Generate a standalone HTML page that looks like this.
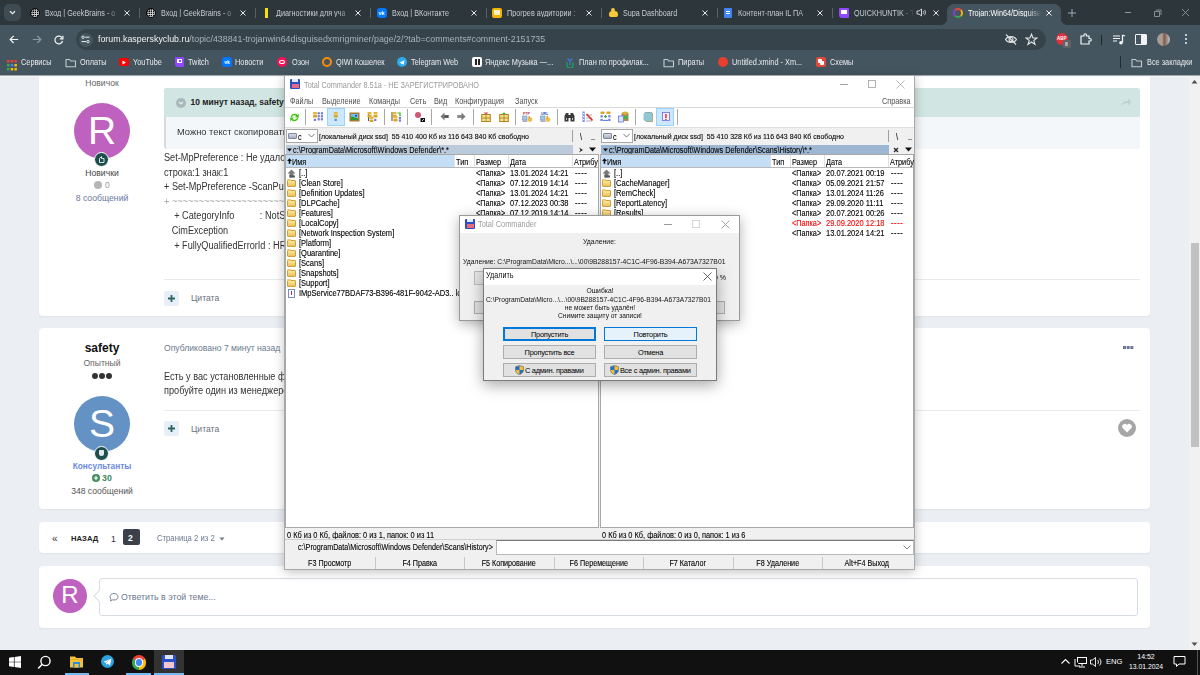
<!DOCTYPE html>
<html><head><meta charset="utf-8">
<style>
*{margin:0;padding:0;box-sizing:border-box}
html,body{width:1200px;height:675px;overflow:hidden;background:#ebeef3;font-family:"Liberation Sans",sans-serif;position:relative}
.a{position:absolute}
.t{position:absolute;white-space:nowrap;line-height:1}
.ct{transform:translateX(-50%)}
.card{position:absolute;background:#fff;border-radius:4px;box-shadow:0 1px 2px rgba(0,0,0,.05)}
.tab{position:absolute;top:0;width:115px;height:25px}
.tab .fav{position:absolute;left:5px;top:8px;width:10px;height:10px;border-radius:50%}
.tab .tt{position:absolute;left:20px;top:8.7px;width:87px;overflow:hidden;white-space:nowrap;line-height:1;font-size:8.3px;transform:scaleX(.87);transform-origin:0 0;color:#c8ced2;-webkit-mask-image:linear-gradient(90deg,#000 82%,transparent)}
.tab .tx{position:absolute;left:98px;top:8px;font-size:9px;line-height:1;color:#dfe3e6}
.sep{position:absolute;top:8px;width:1px;height:10px;background:#56636b}
.bk{position:absolute;top:57px;width:10px;height:11px}
.fold{width:11px;height:9px;top:58px;border:1.2px solid #c4ccd0;border-radius:1px}
.bt{position:absolute;top:58.3px;white-space:nowrap;line-height:1;font-size:8.45px;transform:scaleX(.87);transform-origin:0 0;color:#e8eaed}
.btn{position:absolute;width:93px;height:14px;background:#e1e1e1;border:1px solid #adadad;font-size:7.4px;line-height:13.2px;letter-spacing:-.25px;text-align:center;color:#000;white-space:nowrap}
.tcx{font-size:8.7px;transform:scaleX(.865);transform-origin:0 0;-webkit-text-stroke:.12px currentColor}
</style></head><body>
<!-- ============ FORUM ============ -->
<div class="a" style="left:0;top:75px;width:1189px;height:575px;background:#ebeef3;overflow:hidden">
 <div class="a" style="left:0;top:0;width:1189px;height:575px">
  <!-- card1 -->
  <div class="card" style="left:39px;top:-30px;width:1111px;height:271px"></div>
  <!-- card2 -->
  <div class="card" style="left:39px;top:253px;width:1111px;height:181px"></div>
  <!-- pagination -->
  <div class="card" style="left:39px;top:447px;width:1111px;height:31px"></div>
  <!-- reply -->
  <div class="card" style="left:39px;top:491px;width:1111px;height:62px"></div>
 </div>
</div>
<div class="a" style="left:0;top:74px;width:1200px;height:1px;background:#3f4d56"></div><div class="a" style="left:0;top:75px;width:1200px;height:1px;background:#a3abb1"></div><div class="a" style="left:0;top:76px;width:1189px;height:1px;background:#f2f4f6"></div>
<!-- card1 author -->
<span class="t ct" style="left:102px;top:79px;font-size:8.6px;color:#666">Новичок</span>
<div class="a" style="left:74px;top:103px;width:56px;height:56px;border-radius:50%;background:#bf61bf"></div>
<span class="t" style="left:81px;top:111px;width:42px;text-align:center;font-size:39px;color:#fff">R</span>
<div class="a" style="left:94px;top:152px;width:15px;height:15px;border-radius:50%;background:#1f4f4d;border:1.5px solid #fff"></div>
<svg class="a" style="left:97px;top:155px" width="9" height="9"><path d="M2.5 7.5V3.5L4.5 1.5V3.5H7V7.5Z" fill="none" stroke="#d7e6e5" stroke-width="1"/></svg>
<span class="t ct" style="left:102px;top:169px;font-size:8.6px;color:#444">Новички</span>
<div class="a" style="left:94px;top:181px;width:8px;height:8px;border-radius:50%;background:#b5b5b5"></div>
<span class="t" style="left:105px;top:181px;font-size:8.6px;color:#999">0</span>
<span class="t ct" style="left:102px;top:194px;font-size:8.7px;color:#6b78a0">8 сообщений</span>
<!-- quote -->
<div class="a" style="left:164px;top:88px;width:976px;height:61px;background:#f4f7fa;border-radius:3px;border-left:2px solid #d5dbe0"></div>
<div class="a" style="left:164px;top:88px;width:976px;height:28.5px;background:#d1e6e2;border-radius:3px 3px 0 0"></div>
<div class="a" style="left:176px;top:98px;width:10px;height:10px;border-radius:50%;background:#a9b8b7"></div>
<svg class="a" style="left:178px;top:100px" width="6" height="6"><path d="M1 2L3 4L5 2" stroke="#e8f0ef" stroke-width="1.2" fill="none"/></svg>
<span class="t" style="left:190.5px;top:98.3px;font-size:8.5px;font-weight:bold;color:#222">10 минут назад, safety сказал:</span>
<svg class="a" style="left:1120px;top:97px" width="12" height="10"><path d="M1 9C2 5 5 4 8 4V1.5L11.5 5L8 8.5V6C5 6 3 7 1 9Z" fill="#bcd5d1"/></svg>
<span class="t" style="left:177px;top:126.6px;font-size:9.6px;color:#333;transform:scaleX(.97);transform-origin:0 0">Можно текст скопировать и вставить сюда?</span>
<!-- code text -->
<div class="a" style="left:164px;top:151px;font-size:10px;line-height:14.6px;color:#333;white-space:pre;transform:scaleX(.915);transform-origin:0 0">Set-MpPreference : Не удалось выполнить операцию
строка:1 знак:1
+ Set-MpPreference -ScanPurgeItemsAfterDelay 1
<span style="color:#aaa">+ ~~~~~~~~~~~~~~~~~~~~~~~~~~~~~~~~~~~~~~~~~~~~~~</span>
    + CategoryInfo          : NotSpecified
   CimException
    + FullyQualifiedErrorId : HRESULT 0xc0000142</div>
<div class="a" style="left:164px;top:279px;width:976px;height:1px;background:#e8ebee"></div>
<div class="a" style="left:164px;top:291px;width:15px;height:15px;border-radius:2px;background:#e7f0f7"></div>
<svg class="a" style="left:167px;top:294px" width="9" height="9"><path d="M4.5 1V8M1 4.5H8" stroke="#2e6461" stroke-width="1.8"/></svg>
<span class="t" style="left:191px;top:294px;font-size:8.6px;color:#6b7280">Цитата</span>
<!-- card2 author -->
<span class="t ct" style="left:102px;top:342px;font-size:12px;font-weight:bold;color:#111">safety</span>
<span class="t ct" style="left:102px;top:359px;font-size:8.6px;color:#666">Опытный</span>
<div class="a" style="left:92px;top:373px;width:6px;height:6px;border-radius:50%;background:#333;box-shadow:7px 0 0 #333,14px 0 0 #333"></div>
<div class="a" style="left:74px;top:396px;width:56px;height:56px;border-radius:50%;background:#6592c5"></div>
<span class="t" style="left:81px;top:404px;width:42px;text-align:center;font-size:39px;color:#fff">S</span>
<div class="a" style="left:94px;top:446px;width:15px;height:15px;border-radius:50%;background:#1f4f4d;border:1.5px solid #fff"></div>
<div class="a" style="left:99px;top:450px;width:5px;height:6px;border-radius:1px 1px 3px 3px;background:#e3ecec"></div>
<span class="t ct" style="left:102px;top:462px;font-size:8.3px;font-weight:bold;color:#6a8ae0">Консультанты</span>
<div class="a" style="left:92px;top:474px;width:8px;height:8px;border-radius:50%;background:#3e8b5d"></div>
<svg class="a" style="left:92px;top:474px" width="8" height="8"><path d="M4 1.8V6.2M1.8 4H6.2" stroke="#fff" stroke-width="1.2"/></svg>
<span class="t" style="left:102px;top:474px;font-size:8.8px;font-weight:bold;color:#3e8b5d">30</span>
<span class="t ct" style="left:102px;top:487px;font-size:8.6px;color:#555">348 сообщений</span>
<span class="t" style="left:164px;top:344px;font-size:8.6px;color:#6b7a90">Опубликовано 7 минут назад</span>
<div class="a" style="left:1123px;top:346px;width:2.5px;height:2.5px;background:#6f7a96;box-shadow:3.7px 0 0 #6f7a96,7.4px 0 0 #6f7a96"></div>
<div class="a" style="left:164px;top:369.8px;font-size:10px;line-height:14.2px;color:#333;white-space:pre;transform:scaleX(.915);transform-origin:0 0">Есть у вас установленные файловые менеджеры?
пробуйте один из менеджеров</div>
<div class="a" style="left:164px;top:410px;width:976px;height:1px;background:#e8ebee"></div>
<div class="a" style="left:164px;top:421px;width:15px;height:15px;border-radius:2px;background:#e7f0f7"></div>
<svg class="a" style="left:167px;top:424px" width="9" height="9"><path d="M4.5 1V8M1 4.5H8" stroke="#2e6461" stroke-width="1.8"/></svg>
<span class="t" style="left:191px;top:425px;font-size:8.6px;color:#6b7280">Цитата</span>
<div class="a" style="left:1118px;top:419px;width:18px;height:18px;border-radius:50%;background:#a6a6a6"></div>
<svg class="a" style="left:1121px;top:422px" width="12" height="12"><path d="M6 10.5L1.8 6.3A2.4 2.4 0 0 1 6 3A2.4 2.4 0 0 1 10.2 6.3Z" fill="#fff"/></svg>
<!-- pagination -->
<span class="t" style="left:52px;top:533.5px;font-size:10px;color:#333">«</span>
<span class="t" style="left:71px;top:534.5px;font-size:7.7px;font-weight:bold;color:#222">НАЗАД</span>
<span class="t" style="left:111px;top:534.5px;font-size:8.6px;color:#333">1</span>
<div class="a" style="left:123px;top:529px;width:17px;height:16px;border-radius:2px;background:#3c4048"></div>
<span class="t" style="left:128px;top:534px;font-size:8.6px;font-weight:bold;color:#fff">2</span>
<span class="t" style="left:157px;top:534.5px;font-size:8.2px;color:#6b7a90;transform:scaleX(.94);transform-origin:0 0">Страница 2 из 2</span>
<svg class="a" style="left:218.5px;top:537px" width="6" height="4"><path d="M0.5 0.5H5.5L3 3.5Z" fill="#6b7a90"/></svg>
<!-- reply -->
<div class="a" style="left:53px;top:579px;width:34px;height:34px;border-radius:50%;background:#bf61bf"></div>
<span class="t" style="left:53px;top:583px;width:34px;text-align:center;font-size:24px;color:#fff">R</span>
<div class="a" style="left:99px;top:578px;width:1039px;height:38px;border:1px solid #d8dde3;border-radius:3px;background:#fff"></div>
<div class="a" style="left:95px;top:592px;width:8px;height:8px;border-left:1px solid #d8dde3;border-bottom:1px solid #d8dde3;background:#fff;transform:rotate(45deg)"></div>
<svg class="a" style="left:109px;top:592px" width="10" height="10"><path d="M5 1.5C7.5 1.5 9 3 9 4.7S7.5 8 5 8C4.4 8 3.9 7.9 3.5 7.8L1.5 9L2 7.2C1.4 6.6 1 5.7 1 4.7C1 3 2.5 1.5 5 1.5Z" stroke="#6b7a90" stroke-width="0.9" fill="none"/></svg>
<span class="t" style="left:121px;top:593px;font-size:8.8px;color:#6b7a90">Ответить в этой теме...</span>
<!-- scrollbar -->
<div class="a" style="left:1189px;top:76px;width:11px;height:574px;background:#f1f1f1"></div>
<div class="a" style="left:1191px;top:243px;width:8px;height:204px;background:#c1c1c1"></div>
<svg class="a" style="left:1191px;top:79px" width="7" height="5"><path d="M0.5 4.5L3.5 1L6.5 4.5Z" fill="#505050"/></svg>
<svg class="a" style="left:1191px;top:642px" width="7" height="5"><path d="M0.5 0.5L3.5 4L6.5 0.5Z" fill="#505050"/></svg>

<!-- ============ CHROME ============ -->
<div class="a" style="left:0;top:0;width:1200px;height:25px;background:#2c363b"></div>
<div class="a" style="left:4px;top:4px;width:17px;height:17px;border-radius:5px;background:#3e4b53"></div>
<svg class="a" style="left:8px;top:8px" width="9" height="9" viewBox="0 0 9 9"><path d="M2 3.2 L4.5 5.7 L7 3.2" stroke="#e8eaed" stroke-width="1.3" fill="none"/></svg>
<!-- inactive tabs -->
<div class="tab" style="left:25.0px"><div class="fav" style="background:#0a0a0a;border:1.5px solid #0a0a0a;background-image:radial-gradient(circle,#d8d8d8 0.75px,transparent 1px);background-size:2.2px 2.2px"></div><span class="tt" style="width:87px">Вход | GeekBrains - о</span><svg class="a" style="left:99px;top:9.5px" width="6" height="6"><path d="M0.5 0.5L5.5 5.5M5.5 0.5L0.5 5.5" stroke="#e3e7ea" stroke-width="1"/></svg></div>
<div class="tab" style="left:140.5px"><div class="fav" style="background:#0a0a0a;border:1.5px solid #0a0a0a;background-image:radial-gradient(circle,#d8d8d8 0.75px,transparent 1px);background-size:2.2px 2.2px"></div><span class="tt" style="width:87px">Вход | GeekBrains - о</span><svg class="a" style="left:99px;top:9.5px" width="6" height="6"><path d="M0.5 0.5L5.5 5.5M5.5 0.5L0.5 5.5" stroke="#e3e7ea" stroke-width="1"/></svg></div>
<div class="sep" style="left:139.0px"></div>
<div class="tab" style="left:256.0px"><div class="fav" style="background:transparent;border-radius:0"><div class="a" style="left:4px;top:0;width:2.5px;height:10px;background:#f5e00a"></div></div><span class="tt" style="width:87px">Диагностики для уча</span><svg class="a" style="left:99px;top:9.5px" width="6" height="6"><path d="M0.5 0.5L5.5 5.5M5.5 0.5L0.5 5.5" stroke="#e3e7ea" stroke-width="1"/></svg></div>
<div class="sep" style="left:254.5px"></div>
<div class="tab" style="left:371.5px"><div class="fav" style="background:#0077ff;border-radius:3px;color:#fff;font-size:5.5px;font-weight:bold;text-align:center;line-height:10px">vk</div><span class="tt" style="width:87px">Вход | ВКонтакте</span><svg class="a" style="left:99px;top:9.5px" width="6" height="6"><path d="M0.5 0.5L5.5 5.5M5.5 0.5L0.5 5.5" stroke="#e3e7ea" stroke-width="1"/></svg></div>
<div class="sep" style="left:370.0px"></div>
<div class="tab" style="left:487.0px"><div class="fav" style="background:#f4b400;border-radius:2px"><div class="a" style="left:2px;top:2px;width:6px;height:5px;background:#fff3c4"></div></div><span class="tt" style="width:87px">Прогрев аудитории :</span><svg class="a" style="left:99px;top:9.5px" width="6" height="6"><path d="M0.5 0.5L5.5 5.5M5.5 0.5L0.5 5.5" stroke="#e3e7ea" stroke-width="1"/></svg></div>
<div class="sep" style="left:485.5px"></div>
<div class="tab" style="left:602.5px"><div class="fav" style="background:transparent"><div class="a" style="left:1px;top:3px;width:9px;height:6px;border-radius:4px 4px 3px 3px;background:#f6c83a"></div><div class="a" style="left:3px;top:0px;width:4px;height:4px;border-radius:50%;background:#f6c83a"></div></div><span class="tt" style="width:87px">Supa Dashboard</span><svg class="a" style="left:99px;top:9.5px" width="6" height="6"><path d="M0.5 0.5L5.5 5.5M5.5 0.5L0.5 5.5" stroke="#e3e7ea" stroke-width="1"/></svg></div>
<div class="sep" style="left:601.0px"></div>
<div class="tab" style="left:718.0px"><div class="fav" style="background:#4285f4;border-radius:1px;width:8px;left:6px"><div class="a" style="left:2px;top:3px;width:4px;height:1px;background:#fff"></div><div class="a" style="left:2px;top:5px;width:4px;height:1px;background:#fff"></div></div><span class="tt" style="width:87px">Контент-план IL ПА</span><svg class="a" style="left:99px;top:9.5px" width="6" height="6"><path d="M0.5 0.5L5.5 5.5M5.5 0.5L0.5 5.5" stroke="#e3e7ea" stroke-width="1"/></svg></div>
<div class="sep" style="left:716.5px"></div>
<div class="tab" style="left:833.5px"><div class="fav" style="background:#9146ff;border-radius:1px 1px 1px 3px"><div class="a" style="left:2px;top:2px;width:6px;height:4px;background:#fff"></div></div><span class="tt" style="width:69px">QUICKHUNTIK - Т</span><svg class="a" style="left:82px;top:8px" width="10" height="9"><path d="M1 3H3L5.5 1V8L3 6H1Z" stroke="#dfe3e6" stroke-width="0.9" fill="none"/><path d="M7 3A2 2 0 0 1 7 6M8.3 1.8A3.6 3.6 0 0 1 8.3 7.2" stroke="#dfe3e6" stroke-width="0.8" fill="none"/></svg><svg class="a" style="left:99px;top:9.5px" width="6" height="6"><path d="M0.5 0.5L5.5 5.5M5.5 0.5L0.5 5.5" stroke="#e3e7ea" stroke-width="1"/></svg></div>
<div class="sep" style="left:832.0px"></div>
<!-- active tab -->
<div class="a" style="left:947px;top:4px;width:114px;height:21px;background:#45555f;border-radius:7px 7px 0 0"></div>
<div class="a" style="left:940px;top:18px;width:7px;height:7px;background:radial-gradient(circle at 0 0,#2c363b 7px,#45555f 7.5px)"></div>
<div class="a" style="left:1061px;top:18px;width:7px;height:7px;background:radial-gradient(circle at 7px 0,#2c363b 7px,#45555f 7.5px)"></div>
<div class="a" style="left:953px;top:8px;width:10px;height:10px;border-radius:50%;border:2.5px solid;border-color:#e8453c #f4b400 #34a853 #8e3bd0"></div>
<span class="t" style="left:968px;top:8.7px;font-size:8.4px;transform:scaleX(.87);transform-origin:0 0;color:#fff;width:85px;overflow:hidden;-webkit-mask-image:linear-gradient(90deg,#000 80%,transparent)">Trojan:Win64/Disguised</span>
<svg class="a" style="left:1046px;top:9.5px" width="6" height="6"><path d="M0.5 0.5L5.5 5.5M5.5 0.5L0.5 5.5" stroke="#fff" stroke-width="1"/></svg>
<svg class="a" style="left:1067px;top:8px" width="10" height="10"><path d="M5 1V9M1 5H9" stroke="#aab3b8" stroke-width="0.9"/></svg>
<div class="a" style="left:1125px;top:12px;width:6px;height:1px;background:#8f989d"></div>
<svg class="a" style="left:1153px;top:8px" width="9" height="10"><path d="M1.5 3.5H6.5V8.5H1.5Z" stroke="#8f989d" stroke-width="0.9" fill="none"/><path d="M3 2H8V7" stroke="#8f989d" stroke-width="0.9" fill="none"/></svg>
<svg class="a" style="left:1181px;top:8px" width="9" height="9"><path d="M1 1L8 8M8 1L1 8" stroke="#9aa0a4" stroke-width="0.8"/></svg>
<!-- toolbar -->
<div class="a" style="left:0;top:25px;width:1200px;height:50px;background:#45555f"></div>
<svg class="a" style="left:9px;top:35px" width="10" height="9"><path d="M9.2 4.5H1.2M4.6 1L1.1 4.5L4.6 8" stroke="#f1f3f4" stroke-width="1.15" fill="none"/></svg>
<svg class="a" style="left:31.5px;top:35px" width="10" height="9"><path d="M0.8 4.5H8.8M5.4 1L8.9 4.5L5.4 8" stroke="#8c989f" stroke-width="1.15" fill="none"/></svg>
<svg class="a" style="left:54px;top:34.5px" width="10" height="10"><path d="M8.3 3.2A3.9 3.9 0 1 0 8.6 6" stroke="#f1f3f4" stroke-width="1.2" fill="none"/><path d="M8.9 0.8V3.9H5.8" stroke="#f1f3f4" stroke-width="1.2" fill="none"/></svg>
<div class="a" style="left:76px;top:29px;width:970px;height:21px;border-radius:11px;background:#36434a"></div>
<div class="a" style="left:78.5px;top:32.5px;width:14px;height:14px;border-radius:50%;background:#45555f"></div>
<svg class="a" style="left:81px;top:35px" width="9" height="9"><circle cx="2" cy="2.2" r="1.2" stroke="#eef0f1" stroke-width="0.9" fill="none"/><path d="M4.2 2.2H8.5M0.5 6.6H5.2" stroke="#eef0f1" stroke-width="1"/><circle cx="7" cy="6.6" r="1.2" stroke="#eef0f1" stroke-width="0.9" fill="none"/></svg>
<span class="t" style="left:98px;top:34.3px;font-size:9.5px;transform:scaleX(.93);transform-origin:0 0;color:#f1f3f4">forum.kasperskyclub.ru<span style="color:#a9b4ba">/topic/438841-trojanwin64disguisedxmrigminer/page/2/?tab=comments#comment-2151735</span></span>
<svg class="a" style="left:1004px;top:33px" width="14" height="13"><path d="M1.5 6.5C4 2.5 10 2.5 12.5 6.5C10 10.5 4 10.5 1.5 6.5Z" stroke="#dfe3e6" stroke-width="1.1" fill="none"/><circle cx="7" cy="6.5" r="2" stroke="#dfe3e6" stroke-width="1.1" fill="none"/><path d="M2 1.5L12 11.5" stroke="#dfe3e6" stroke-width="1.1"/></svg>
<svg class="a" style="left:1025px;top:33px" width="13" height="13"><path d="M6.5 1.2L8 5H12L8.8 7.4L10 11.5L6.5 9L3 11.5L4.2 7.4L1 5H5Z" stroke="#dfe3e6" stroke-width="1.1" fill="none"/></svg>
<div class="a" style="left:1056px;top:33px;width:12px;height:12px;border-radius:50%;background:#e0303a"></div>
<span class="t" style="left:1057px;top:37px;font-size:4.5px;color:#fff;font-weight:bold">ABP</span>
<div class="a" style="left:1063px;top:40px;width:8px;height:8px;border-radius:1px;background:#5f6368"></div>
<span class="t" style="left:1065px;top:42px;font-size:5px;color:#fff">8</span>
<svg class="a" style="left:1079px;top:33px" width="13" height="13"><path d="M2 3H5V2A1.2 1.2 0 0 1 7.5 2V3H10V5.5H11A1.2 1.2 0 0 1 11 8H10V11H2Z" stroke="#f1f3f4" stroke-width="1.2" fill="none"/></svg>
<div class="a" style="left:1101px;top:35px;width:1px;height:10px;background:#1f272b"></div>
<svg class="a" style="left:1112px;top:33px" width="14" height="13"><path d="M1 3H8M1 5.5H8M1 8H5" stroke="#f1f3f4" stroke-width="1.2"/><path d="M10.5 2V9.5" stroke="#f1f3f4" stroke-width="1.3"/><circle cx="9" cy="9.8" r="1.8" fill="#f1f3f4"/><path d="M10.5 2L13 3" stroke="#f1f3f4" stroke-width="1.2"/></svg>
<div class="a" style="left:1135px;top:34px;width:12px;height:11px;border:1.3px solid #f1f3f4;border-radius:1px"></div>
<div class="a" style="left:1141px;top:35px;width:5px;height:9px;background:#f1f3f4"></div>
<div class="a" style="left:1157px;top:33px;width:13px;height:13px;border-radius:50%;background:linear-gradient(90deg,#9aa0a6,#b49a8a 40%,#7b5a48 55%,#c2c6c9)"></div>
<div class="a" style="left:1185px;top:34px;width:2px;height:2px;border-radius:50%;background:#f1f3f4;box-shadow:0 4px 0 #f1f3f4,0 8px 0 #f1f3f4"></div>

<!-- bookmarks -->
<div class="bk" style="left:7px"><svg width="10" height="11"><g fill="#ea4335"><rect x="0" y="0" width="2.5" height="2.5"/><rect x="3.7" y="0" width="2.5" height="2.5"/><rect x="7.4" y="0" width="2.5" height="2.5"/></g><g><rect x="0" y="4" width="2.5" height="2.5" fill="#34a853"/><rect x="3.7" y="4" width="2.5" height="2.5" fill="#4285f4"/><rect x="7.4" y="4" width="2.5" height="2.5" fill="#fbbc04"/><rect x="0" y="8" width="2.5" height="2.5" fill="#34a853"/><rect x="3.7" y="8" width="2.5" height="2.5" fill="#fbbc04"/><rect x="7.4" y="8" width="2.5" height="2.5" fill="#fbbc04"/></g></svg></div>
<span class="bt" style="left:21px">Сервисы</span>
<svg class="a" style="left:65px;top:58px" width="12" height="10"><path d="M1 1.5H4.5L5.8 3H10.5V8.8H1Z" stroke="#c4ccd0" stroke-width="1.1" fill="none" stroke-linejoin="round"/></svg>
<span class="bt" style="left:80px">Оплаты</span>
<div class="bk" style="left:119px;top:58px;width:10px;height:8px;background:#f00;border-radius:2px"></div><svg class="a" style="left:122px;top:60px" width="5" height="5"><path d="M0.5 0.5L4 2.5L0.5 4.5Z" fill="#fff"/></svg>
<span class="bt" style="left:133px">YouTube</span>
<div class="bk" style="left:175px;top:57px;width:9px;height:10px;background:#9146ff;border-radius:1px 1px 1px 3px"></div><div class="a" style="left:177px;top:59px;width:5px;height:4px;background:#fff"></div><div class="a" style="left:178.5px;top:60px;width:0.8px;height:2px;background:#9146ff"></div><div class="a" style="left:180px;top:60px;width:0.8px;height:2px;background:#9146ff"></div>
<span class="bt" style="left:188px">Twitch</span>
<div class="bk" style="left:222px;top:57px;width:10px;height:10px;background:#0077ff;border-radius:3px;color:#fff;font-size:5px;font-weight:bold;text-align:center;line-height:10px">vk</div>
<span class="bt" style="left:235px">Новости</span>
<div class="bk" style="left:277px;top:57px;width:10px;height:10px;background:#f91155;border-radius:50%"></div><div class="a" style="left:279px;top:60px;width:6px;height:4px;border:1.3px solid #fff;border-radius:50%"></div>
<span class="bt" style="left:292px">Озон</span>
<div class="bk" style="left:322px;top:57px;width:10px;height:10px;border:2px solid #ff8c00;border-radius:50%"></div>
<span class="bt" style="left:336px">QIWI Кошелек</span>
<div class="bk" style="left:397px;top:57px;width:10px;height:10px;background:#2aabee;border-radius:50%"></div><svg class="a" style="left:399px;top:59.5px" width="6" height="5"><path d="M0.2 2.4L5.6 0.3L4.7 4.7L2.8 3.4L2 4.4V3.1L4.6 0.9L1.6 2.9Z" fill="#fff"/></svg>
<span class="bt" style="left:411px">Telegram Web</span>
<div class="bk" style="left:472px;top:57px;width:10px;height:10px;background:#fff;border-radius:2px"></div><div class="a" style="left:475px;top:59px;width:1.5px;height:6px;background:#222"></div><div class="a" style="left:478px;top:59px;width:1.5px;height:6px;background:#222"></div>
<span class="bt" style="left:485px">Яндекс Музыка —...</span>
<svg class="a" style="left:565px;top:57px" width="10" height="11"><path d="M2 5V8A3 3 0 0 0 8 8V5" stroke="#1aa260" stroke-width="1.3" fill="none"/><path d="M2.5 1.5L5 4L7.5 1.5M5 4V8" stroke="#3b7dd8" stroke-width="1.2" fill="none"/></svg>
<span class="bt" style="left:579px">План по профилак...</span>
<svg class="a" style="left:663px;top:58px" width="12" height="10"><path d="M1 1.5H4.5L5.8 3H10.5V8.8H1Z" stroke="#c4ccd0" stroke-width="1.1" fill="none" stroke-linejoin="round"/></svg>
<span class="bt" style="left:678px">Пираты</span>
<div class="bk" style="left:718px;top:57px;width:10px;height:10px;background:#e8402f;border-radius:50%"></div>
<span class="bt" style="left:732px">Untitled.xmind - Xm...</span>
<div class="bk" style="left:816px;top:57px;width:10px;height:10px;background:#e04a3a;border-radius:2px"></div><div class="a" style="left:818px;top:59px;width:4px;height:4px;background:#fff;border-radius:1px;box-shadow:2px 2px 0 #fff"></div>
<span class="bt" style="left:830px">Схемы</span>
<div class="a" style="left:1120px;top:56px;width:1px;height:12px;background:#222b2f"></div>
<svg class="a" style="left:1131px;top:58px" width="12" height="10"><path d="M1 1.5H4.5L5.8 3H10.5V8.8H1Z" stroke="#c4ccd0" stroke-width="1.1" fill="none" stroke-linejoin="round"/></svg>
<span class="bt" style="left:1147px">Все закладки</span>

<!-- ============ TOTAL COMMANDER ============ -->
<div class="a" style="left:284px;top:75px;width:631px;height:495px;background:#f0f0f0;border:1px solid #a9a9a9;box-shadow:0 2px 10px rgba(0,0,0,.25)"></div>
<div class="a" style="left:285px;top:76px;width:629px;height:31px;background:#fff"></div>
<div class="a" style="left:290px;top:79px;width:10px;height:10px;background:#2b4fc7;border-radius:1px"></div>
<div class="a" style="left:292px;top:79px;width:6px;height:3px;background:#e8ecf8"></div>
<div class="a" style="left:291.5px;top:84px;width:7px;height:4px;background:#e86a7c"></div>
<span class="t" style="left:304px;top:81px;font-size:8.39px;transform:scaleX(.87);transform-origin:0 0;color:#9a9a9a">Total Commander 8.51a - НЕ ЗАРЕГИСТРИРОВАНО</span>
<div class="a" style="left:840px;top:84px;width:8px;height:1px;background:#a0a0a0"></div>
<svg class="a" style="left:868px;top:80px" width="8" height="8"><rect x="0.5" y="0.5" width="7" height="7" stroke="#a0a0a0" stroke-width="0.8" fill="none"/></svg>
<svg class="a" style="left:895.5px;top:80px" width="9" height="9"><path d="M0.5 0.5L8.5 8.5M8.5 0.5L0.5 8.5" stroke="#a0a0a0" stroke-width="0.75"/></svg>
<span class="t" style="left:290px;top:97px;font-size:8.39px;transform:scaleX(.87);transform-origin:0 0;color:#505050">Файлы</span>
<span class="t" style="left:322px;top:97px;font-size:8.39px;transform:scaleX(.87);transform-origin:0 0;color:#505050">Выделение</span>
<span class="t" style="left:369px;top:97px;font-size:8.39px;transform:scaleX(.87);transform-origin:0 0;color:#505050">Команды</span>
<span class="t" style="left:410px;top:97px;font-size:8.39px;transform:scaleX(.87);transform-origin:0 0;color:#505050">Сеть</span>
<span class="t" style="left:434px;top:97px;font-size:8.39px;transform:scaleX(.87);transform-origin:0 0;color:#505050">Вид</span>
<span class="t" style="left:455px;top:97px;font-size:8.39px;transform:scaleX(.87);transform-origin:0 0;color:#505050">Конфигурация</span>
<span class="t" style="left:515px;top:97px;font-size:8.39px;transform:scaleX(.87);transform-origin:0 0;color:#505050">Запуск</span>
<span class="t" style="left:882px;top:97px;font-size:8.39px;transform:scaleX(.87);transform-origin:0 0;color:#505050">Справка</span>
<div class="a" style="left:285px;top:107px;width:629px;height:1px;background:#dadada"></div>
<div class="a" style="left:285px;top:108px;width:629px;height:19px;background:#fff"></div>
<div class="a" style="left:285px;top:127px;width:629px;height:1px;background:#dedede"></div>
<div class="a" style="left:327px;top:108px;width:18px;height:18px;background:#cce8ff;border:1px solid #99d1ff"></div>
<div class="a" style="left:656px;top:108px;width:18px;height:18px;background:#cce8ff;border:1px solid #99d1ff"></div>
<div class="a" style="left:305px;top:109px;width:1px;height:16px;background:#a8a8a8"></div>
<div class="a" style="left:384px;top:109px;width:1px;height:16px;background:#a8a8a8"></div>
<div class="a" style="left:407px;top:109px;width:1px;height:16px;background:#a8a8a8"></div>
<div class="a" style="left:431px;top:109px;width:1px;height:16px;background:#a8a8a8"></div>
<div class="a" style="left:473px;top:109px;width:1px;height:16px;background:#a8a8a8"></div>
<div class="a" style="left:515px;top:109px;width:1px;height:16px;background:#a8a8a8"></div>
<div class="a" style="left:557px;top:109px;width:1px;height:16px;background:#a8a8a8"></div>
<div class="a" style="left:635px;top:109px;width:1px;height:16px;background:#a8a8a8"></div>
<div class="a" style="left:677px;top:109px;width:1px;height:16px;background:#a8a8a8"></div>
<svg class="a" style="left:289px;top:111.5px" width="11" height="11" viewBox="0 0 11 11"><path d="M1.5 5.2C2 2.8 4 1.6 6.2 1.8C7.3 1.9 8 2.3 8.6 2.9L9.8 1.6V5.4H6L7.3 4.1C6 2.9 3.6 3.1 2.9 5.3Z" fill="#45c514"/><path d="M9.5 5.8C9 8.2 7 9.4 4.8 9.2C3.7 9.1 3 8.7 2.4 8.1L1.2 9.4V5.6H5L3.7 6.9C5 8.1 7.4 7.9 8.1 5.7Z" fill="#45c514"/></svg>
<svg class="a" style="left:313px;top:112px" width="11" height="10" viewBox="0 0 11 10"><rect x="0" y="0" width="4" height="2.6" rx="0.6" fill="#e5b83c"/><rect x="0" y="3" width="4" height="2.6" rx="0.6" fill="#d9a52a"/><rect x="0.8" y="6.8" width="2.2" height="2.2" fill="#6c7ed8"/><rect x="4.6" y="0.2" width="2.2" height="2.2" fill="#6c7ed8"/><rect x="4.6" y="3.2" width="2.2" height="2.2" fill="#6c7ed8"/><rect x="4.6" y="6.2" width="2.2" height="2.2" fill="#6c7ed8"/><rect x="7.8" y="0.2" width="2.2" height="2.2" fill="#6c7ed8"/><rect x="7.8" y="3.2" width="2.2" height="2.2" fill="#6c7ed8"/><rect x="7.8" y="6.2" width="2.2" height="2.2" fill="#6c7ed8"/></svg>
<svg class="a" style="left:333px;top:112px" width="6" height="10" viewBox="0 0 6 10"><rect x="0.8" y="0" width="4" height="2.6" rx="0.6" fill="#e5b83c"/><rect x="0.8" y="3" width="4" height="2.6" rx="0.6" fill="#d9a52a"/><rect x="1.6" y="6.8" width="2.2" height="2.2" fill="#6c7ed8"/></svg>
<svg class="a" style="left:349px;top:112px" width="11" height="10" viewBox="0 0 11 10"><rect x="0.5" y="0.5" width="10" height="9" fill="#a57a32"/><rect x="2" y="2" width="7" height="6" fill="#6ec0ee"/><path d="M2 8V5C4 4 6 5.5 9 6.5V8Z" fill="#2f9a2f"/><circle cx="7" cy="3.8" r="1" fill="#2a3a7a"/></svg>
<svg class="a" style="left:367px;top:112px" width="11" height="10" viewBox="0 0 11 10"><rect x="1" y="2" width="1" height="7" fill="#555"/><rect x="0.5" y="0" width="4" height="2.6" rx="0.6" fill="#e5b83c"/><rect x="0.5" y="3" width="4" height="2.6" rx="0.6" fill="#d9a52a"/><rect x="2.5" y="4.5" width="4" height="2.6" rx="0.6" fill="#e5b83c"/><rect x="2.5" y="7.5" width="4" height="2.6" rx="0.6" fill="#d9a52a"/><rect x="6.5" y="0" width="4" height="2.6" rx="0.6" fill="#e5b83c"/><rect x="6.5" y="3" width="4" height="2.6" rx="0.6" fill="#d9a52a"/><rect x="7.2" y="6.8" width="2.2" height="2.2" fill="#6c7ed8"/></svg>
<svg class="a" style="left:391px;top:111px" width="11" height="11" viewBox="0 0 11 11"><rect x="0.5" y="1" width="1" height="9" fill="#444"/><rect x="1.5" y="1" width="4" height="2.6" rx="0.6" fill="#e5b83c"/><rect x="1.5" y="4" width="4" height="2.6" rx="0.6" fill="#d9a52a"/><rect x="2.5" y="5" width="4" height="2.6" rx="0.6" fill="#e5b83c"/><rect x="2.5" y="8" width="4" height="2.6" rx="0.6" fill="#d9a52a"/><path d="M6.5 2H9V4" stroke="#2cb52c" stroke-width="1.2" fill="none"/><path d="M7.8 4L9 5.5L10.2 4Z" fill="#2cb52c"/><rect x="7.8" y="6.0" width="2.2" height="2.2" fill="#6c7ed8"/><rect x="7.8" y="8.5" width="2.2" height="2.2" fill="#6c7ed8"/></svg>
<svg class="a" style="left:414px;top:111px" width="12" height="12" viewBox="0 0 12 12"><circle cx="4" cy="4" r="3" fill="#c8385a" opacity=".85"/><rect x="6.5" y="7" width="4.5" height="4" fill="#111"/><path d="M8 10L10 8" stroke="#fff" stroke-width="0.8"/></svg>
<svg class="a" style="left:440px;top:112px" width="9" height="9" viewBox="0 0 9 9"><path d="M0.5 4.5L4.5 0.5V3H8.5V6H4.5V8.5Z" fill="#7a7a7a"/><path d="M4.5 3H8.5V6H4.5" fill="#5a5a5a"/></svg>
<svg class="a" style="left:457px;top:112px" width="9" height="9" viewBox="0 0 9 9"><path d="M8.5 4.5L4.5 0.5V3H0.5V6H4.5V8.5Z" fill="#7a7a7a"/><path d="M4.5 3H0.5V6H4.5" fill="#8a8a8a"/></svg>
<svg class="a" style="left:481px;top:112px" width="10" height="10" viewBox="0 0 10 10"><path d="M2.5 0.5H7.5L5 2.5Z" fill="#e0405a"/><rect x="0.7" y="2.5" width="8.6" height="7" fill="#f6e08a" stroke="#b08420" stroke-width="1"/><path d="M5 2.5V9.5M0.7 6H9.3" stroke="#b08420" stroke-width="0.9"/></svg>
<svg class="a" style="left:499px;top:112px" width="10" height="10" viewBox="0 0 10 10"><path d="M2.5 2.5H7.5L5 0.3Z" fill="#30c030"/><rect x="0.7" y="2.5" width="8.6" height="7" fill="#f6e08a" stroke="#b08420" stroke-width="1"/><path d="M5 2.5V9.5M0.7 6H9.3" stroke="#b08420" stroke-width="0.9"/></svg>
<svg class="a" style="left:522px;top:111px" width="11" height="12" viewBox="0 0 11 12"><text x="1" y="3.5" font-size="3.6" font-family="Liberation Sans" font-weight="bold" fill="#b03050">FTP</text><rect x="0.5" y="5" width="4.5" height="4" fill="#9ecbe8" stroke="#7a8ab8" stroke-width="0.6"/><rect x="0.5" y="9.5" width="5" height="1.2" fill="#8a8aa8"/><circle cx="8" cy="8.6" r="2.4" fill="#f0c04a"/><rect x="6.5" y="5" width="1.5" height="3" fill="#e0a830"/></svg>
<svg class="a" style="left:540px;top:111px" width="11" height="12" viewBox="0 0 11 12"><text x="1" y="3.5" font-size="3.6" font-family="Liberation Sans" font-weight="bold" fill="#3050b0">URL</text><rect x="0.5" y="5" width="4.5" height="4" fill="#9ecbe8" stroke="#7a8ab8" stroke-width="0.6"/><rect x="0.5" y="9.5" width="5" height="1.2" fill="#8a8aa8"/><circle cx="8" cy="8.6" r="2.4" fill="#f0c04a"/><rect x="6.5" y="5" width="1.5" height="3" fill="#e0a830"/></svg>
<svg class="a" style="left:564px;top:112px" width="11" height="10" viewBox="0 0 11 10"><path d="M0.5 9.5V4L2 1H4.5V9.5Z" fill="#3a3a3a"/><path d="M10.5 9.5V4L9 1H6.5V9.5Z" fill="#3a3a3a"/><rect x="4" y="3" width="3" height="3" fill="#3a3a3a"/><rect x="2" y="6" width="1" height="2" fill="#bbb"/><rect x="8" y="6" width="1" height="2" fill="#bbb"/></svg>
<svg class="a" style="left:582px;top:111px" width="12" height="12" viewBox="0 0 12 12"><rect x="0.5" y="0.5" width="2.2" height="10.5" fill="#7a8ce0"/><rect x="1" y="2" width="1.2" height="1.2" fill="#fff"/><rect x="1" y="5" width="1.2" height="1.2" fill="#fff"/><rect x="1" y="8" width="1.2" height="1.2" fill="#fff"/><path d="M4 4H10M4 7H10M4 10H10" stroke="#9a9a9a" stroke-width="0.8"/><path d="M4.5 3L10.5 9.5" stroke="#e02a2a" stroke-width="1.6"/></svg>
<svg class="a" style="left:600px;top:111px" width="11" height="12" viewBox="0 0 11 12"><rect x="0.5" y="0.5" width="4" height="2.5" rx="0.8" fill="#d9a52a"/><rect x="6.5" y="0.5" width="4" height="2.5" rx="0.8" fill="#d9a52a"/><rect x="0.5" y="4.2" width="2.2" height="2.2" fill="#6c7ed8"/><rect x="0.5" y="7.800000000000001" width="2.2" height="2.2" fill="#6c7ed8"/><rect x="8.3" y="4.2" width="2.2" height="2.2" fill="#6c7ed8"/><rect x="8.3" y="7.800000000000001" width="2.2" height="2.2" fill="#6c7ed8"/><path d="M5.5 4V7M4 5.5H7" stroke="#30b030" stroke-width="1.1"/><path d="M3 9.4H8" stroke="#4a7ae0" stroke-width="1"/></svg>
<svg class="a" style="left:618px;top:111px" width="11" height="12" viewBox="0 0 11 12"><rect x="3.5" y="2" width="7" height="8" fill="#a88a5a"/><ellipse cx="7" cy="2" rx="3" ry="1.5" fill="#d9b040"/><rect x="0.5" y="5" width="5" height="6" fill="#d8e4f8" stroke="#6a7ad8" stroke-width="0.8"/><circle cx="7.8" cy="6.5" r="1.8" fill="#30c030"/></svg>
<svg class="a" style="left:643px;top:112px" width="10" height="10" viewBox="0 0 10 10"><path d="M1.5 0.5H9V9.5H2.5L0.5 8V2Z" fill="#8fc8d4"/><path d="M2 0.5H9" stroke="#8a9a9a" stroke-width="0.8"/><path d="M3 9.6H9.5V1" stroke="#a08a5a" stroke-width="0.8" fill="none"/></svg>
<svg class="a" style="left:662px;top:112px" width="8" height="9" viewBox="0 0 8 9"><rect x="0.5" y="0.5" width="7" height="8" fill="#f0f2ff" stroke="#7a7ae0" stroke-width="0.9"/><rect x="3.2" y="2" width="1.4" height="4" fill="#e02020"/><rect x="3.2" y="6.8" width="1.4" height="1.2" fill="#e02020"/></svg>
<div class="a" style="left:286px;top:129px;width:32px;height:14px;background:#fff;border:1px solid #a8a8a8"></div>
<div class="a" style="left:288px;top:133px;width:9px;height:6px;background:linear-gradient(#d8dce8,#a8acc0);border-radius:1px;border:1px solid #8088a0"></div>
<span class="t" style="left:298px;top:132.5px;font-size:8.39px;transform:scaleX(.87);transform-origin:0 0;color:#000;-webkit-text-stroke:.1px #000">c</span>
<svg class="a" style="left:308px;top:133px" width="7" height="5"><path d="M0.5 1L3.5 4L6.5 1" stroke="#666" stroke-width="0.9" fill="none"/></svg>
<span class="t" style="left:319px;top:132.5px;font-size:8.05px;transform:scaleX(.87);transform-origin:0 0;color:#000;-webkit-text-stroke:.1px #000">[локальный диск ssd]&nbsp; 55 410 400 Кб из 116 643 840 Кб свободно</span>
<div class="a" style="left:572px;top:130px;width:1px;height:12px;background:#a0a0a0"></div>
<span class="t" style="left:580px;top:132.5px;font-size:8.39px;transform:scaleX(.87);transform-origin:0 0;color:#000;-webkit-text-stroke:.1px #000">\</span>
<span class="t" style="left:591px;top:132.5px;font-size:8.39px;transform:scaleX(.87);transform-origin:0 0;color:#000;-webkit-text-stroke:.1px #000">..</span>
<div class="a" style="left:601px;top:129px;width:32px;height:14px;background:#fff;border:1px solid #a8a8a8"></div>
<div class="a" style="left:603px;top:133px;width:9px;height:6px;background:linear-gradient(#d8dce8,#a8acc0);border-radius:1px;border:1px solid #8088a0"></div>
<span class="t" style="left:613px;top:132.5px;font-size:8.39px;transform:scaleX(.87);transform-origin:0 0;color:#000;-webkit-text-stroke:.1px #000">c</span>
<svg class="a" style="left:623px;top:133px" width="7" height="5"><path d="M0.5 1L3.5 4L6.5 1" stroke="#666" stroke-width="0.9" fill="none"/></svg>
<span class="t" style="left:634px;top:132.5px;font-size:8.05px;transform:scaleX(.87);transform-origin:0 0;color:#000;-webkit-text-stroke:.1px #000">[локальный диск ssd]&nbsp; 55 410 328 Кб из 116 643 840 Кб свободно</span>
<div class="a" style="left:888px;top:130px;width:1px;height:12px;background:#a0a0a0"></div>
<span class="t" style="left:896px;top:132.5px;font-size:8.39px;transform:scaleX(.87);transform-origin:0 0;color:#000;-webkit-text-stroke:.1px #000">\</span>
<span class="t" style="left:908px;top:132.5px;font-size:8.39px;transform:scaleX(.87);transform-origin:0 0;color:#000;-webkit-text-stroke:.1px #000">..</span>
<div class="a" style="left:286px;top:145px;width:287px;height:9px;background:#bccbdb"></div>
<div class="a" style="left:601px;top:145px;width:288px;height:9px;background:#9db6d3"></div>
<svg class="a" style="left:287px;top:148px" width="5" height="4"><path d="M0 0.5H5L2.5 3.5Z" fill="#111"/></svg>
<svg class="a" style="left:603px;top:148px" width="5" height="4"><path d="M0 0.5H5L2.5 3.5Z" fill="#111"/></svg>
<span class="t" style="left:293px;top:146px;font-size:8.39px;transform:scaleX(.87);transform-origin:0 0;color:#000;-webkit-text-stroke:.1px #000">c:\ProgramData\Microsoft\Windows Defender\*.*</span>
<span class="t" style="left:609px;top:146px;font-size:8.39px;transform:scaleX(.87);transform-origin:0 0;color:#000;-webkit-text-stroke:.1px #000">c:\ProgramData\Microsoft\Windows Defender\Scans\History\*.*</span>
<svg class="a" style="left:578px;top:147px" width="6" height="6"><path d="M1 0.5L5 3L1 5.5L2.5 3Z" fill="#222"/></svg>
<svg class="a" style="left:589px;top:147px" width="7" height="5"><path d="M0 0.5H7L3.5 4.5Z" fill="#111"/></svg>
<svg class="a" style="left:893px;top:147px" width="6" height="6"><path d="M1 1L5 5M5 1L1 5" stroke="#222" stroke-width="1.2"/></svg>
<svg class="a" style="left:905px;top:147px" width="7" height="5"><path d="M0 0.5H7L3.5 4.5Z" fill="#111"/></svg>
<div class="a" style="left:285px;top:154px;width:314px;height:374px;background:#fff;border:1px solid #a8a8a8"></div>
<div class="a" style="left:286px;top:155px;width:168px;height:12px;background:#c4dff5"></div>
<div class="a" style="left:286px;top:167px;width:312px;height:1px;background:#b8b8b8"></div>
<svg class="a" style="left:287px;top:157.5px" width="5" height="6"><path d="M2.5 0.3L5 3H3.3V5.8H1.7V3H0Z" fill="#111"/></svg>
<span class="t" style="left:292px;top:157.5px;font-size:8.39px;transform:scaleX(.87);transform-origin:0 0;color:#000;-webkit-text-stroke:.1px #000">Имя</span>
<div class="a" style="left:454px;top:155px;width:1px;height:12px;background:#e0e0e0"></div>
<span class="t" style="left:456px;top:157.5px;font-size:8.39px;transform:scaleX(.87);transform-origin:0 0;color:#000;-webkit-text-stroke:.1px #000">Тип</span>
<div class="a" style="left:474px;top:155px;width:1px;height:12px;background:#e0e0e0"></div>
<span class="t" style="left:476px;top:157.5px;font-size:8.39px;transform:scaleX(.87);transform-origin:0 0;color:#000;-webkit-text-stroke:.1px #000">Размер</span>
<div class="a" style="left:508px;top:155px;width:1px;height:12px;background:#e0e0e0"></div>
<span class="t" style="left:510px;top:157.5px;font-size:8.39px;transform:scaleX(.87);transform-origin:0 0;color:#000;-webkit-text-stroke:.1px #000">Дата</span>
<div class="a" style="left:572px;top:155px;width:1px;height:12px;background:#e0e0e0"></div>
<span class="t" style="left:574px;top:157.5px;font-size:8.39px;transform:scaleX(.87);transform-origin:0 0;color:#000;-webkit-text-stroke:.1px #000">Атрибу</span>
<svg class="a" style="left:287px;top:169px" width="9" height="9"><path d="M4.5 0.5L8.5 4.5H6.5V8.5H2.5V4.5H0.5Z" fill="#7a7a7a"/><path d="M2.5 6V8.5H8V6.5" fill="#5a5a5a"/></svg>
<span class="t tcx" style="left:298.5px;top:169.2px;color:#000">[..]</span>
<span class="t tcx" style="left:476.3px;top:169.2px;color:#000;transform:scaleX(.84)">&lt;Папка&gt;</span>
<span class="t tcx" style="left:510px;top:169.2px;color:#000;transform:scaleX(.865)">13.01.2024 14:21</span>
<span class="t tcx" style="left:574.5px;top:169.2px;color:#000;letter-spacing:.7px">----</span>
<div class="a" style="left:286.5px;top:180px;width:9px;height:7px;background:linear-gradient(#fbe79a,#eec15a);border:1px solid #caa040;border-radius:1px"></div><div class="a" style="left:286.5px;top:179px;width:4px;height:2px;background:#eec864;border-radius:1px 1px 0 0"></div>
<span class="t tcx" style="left:298.5px;top:179.2px;color:#000">[Clean Store]</span>
<span class="t tcx" style="left:476.3px;top:179.2px;color:#000;transform:scaleX(.84)">&lt;Папка&gt;</span>
<span class="t tcx" style="left:510px;top:179.2px;color:#000;transform:scaleX(.865)">07.12.2019 14:14</span>
<span class="t tcx" style="left:574.5px;top:179.2px;color:#000;letter-spacing:.7px">----</span>
<div class="a" style="left:286.5px;top:190px;width:9px;height:7px;background:linear-gradient(#fbe79a,#eec15a);border:1px solid #caa040;border-radius:1px"></div><div class="a" style="left:286.5px;top:189px;width:4px;height:2px;background:#eec864;border-radius:1px 1px 0 0"></div>
<span class="t tcx" style="left:298.5px;top:189.2px;color:#000">[Definition Updates]</span>
<span class="t tcx" style="left:476.3px;top:189.2px;color:#000;transform:scaleX(.84)">&lt;Папка&gt;</span>
<span class="t tcx" style="left:510px;top:189.2px;color:#000;transform:scaleX(.865)">13.01.2024 14:21</span>
<span class="t tcx" style="left:574.5px;top:189.2px;color:#000;letter-spacing:.7px">----</span>
<div class="a" style="left:286.5px;top:200px;width:9px;height:7px;background:linear-gradient(#fbe79a,#eec15a);border:1px solid #caa040;border-radius:1px"></div><div class="a" style="left:286.5px;top:199px;width:4px;height:2px;background:#eec864;border-radius:1px 1px 0 0"></div>
<span class="t tcx" style="left:298.5px;top:199.2px;color:#000">[DLPCache]</span>
<span class="t tcx" style="left:476.3px;top:199.2px;color:#000;transform:scaleX(.84)">&lt;Папка&gt;</span>
<span class="t tcx" style="left:510px;top:199.2px;color:#000;transform:scaleX(.865)">07.12.2023 00:38</span>
<span class="t tcx" style="left:574.5px;top:199.2px;color:#000;letter-spacing:.7px">----</span>
<div class="a" style="left:286.5px;top:210px;width:9px;height:7px;background:linear-gradient(#fbe79a,#eec15a);border:1px solid #caa040;border-radius:1px"></div><div class="a" style="left:286.5px;top:209px;width:4px;height:2px;background:#eec864;border-radius:1px 1px 0 0"></div>
<span class="t tcx" style="left:298.5px;top:209.2px;color:#000">[Features]</span>
<span class="t tcx" style="left:476.3px;top:209.2px;color:#000;transform:scaleX(.84)">&lt;Папка&gt;</span>
<span class="t tcx" style="left:510px;top:209.2px;color:#000;transform:scaleX(.865)">07.12.2019 14:14</span>
<span class="t tcx" style="left:574.5px;top:209.2px;color:#000;letter-spacing:.7px">----</span>
<div class="a" style="left:286.5px;top:220px;width:9px;height:7px;background:linear-gradient(#fbe79a,#eec15a);border:1px solid #caa040;border-radius:1px"></div><div class="a" style="left:286.5px;top:219px;width:4px;height:2px;background:#eec864;border-radius:1px 1px 0 0"></div>
<span class="t tcx" style="left:298.5px;top:219.2px;color:#000">[LocalCopy]</span>
<div class="a" style="left:286.5px;top:230px;width:9px;height:7px;background:linear-gradient(#fbe79a,#eec15a);border:1px solid #caa040;border-radius:1px"></div><div class="a" style="left:286.5px;top:229px;width:4px;height:2px;background:#eec864;border-radius:1px 1px 0 0"></div>
<span class="t tcx" style="left:298.5px;top:229.2px;color:#000">[Network Inspection System]</span>
<div class="a" style="left:286.5px;top:240px;width:9px;height:7px;background:linear-gradient(#fbe79a,#eec15a);border:1px solid #caa040;border-radius:1px"></div><div class="a" style="left:286.5px;top:239px;width:4px;height:2px;background:#eec864;border-radius:1px 1px 0 0"></div>
<span class="t tcx" style="left:298.5px;top:239.2px;color:#000">[Platform]</span>
<div class="a" style="left:286.5px;top:250px;width:9px;height:7px;background:linear-gradient(#fbe79a,#eec15a);border:1px solid #caa040;border-radius:1px"></div><div class="a" style="left:286.5px;top:249px;width:4px;height:2px;background:#eec864;border-radius:1px 1px 0 0"></div>
<span class="t tcx" style="left:298.5px;top:249.2px;color:#000">[Quarantine]</span>
<div class="a" style="left:286.5px;top:260px;width:9px;height:7px;background:linear-gradient(#fbe79a,#eec15a);border:1px solid #caa040;border-radius:1px"></div><div class="a" style="left:286.5px;top:259px;width:4px;height:2px;background:#eec864;border-radius:1px 1px 0 0"></div>
<span class="t tcx" style="left:298.5px;top:259.2px;color:#000">[Scans]</span>
<div class="a" style="left:286.5px;top:270px;width:9px;height:7px;background:linear-gradient(#fbe79a,#eec15a);border:1px solid #caa040;border-radius:1px"></div><div class="a" style="left:286.5px;top:269px;width:4px;height:2px;background:#eec864;border-radius:1px 1px 0 0"></div>
<span class="t tcx" style="left:298.5px;top:269.2px;color:#000">[Snapshots]</span>
<div class="a" style="left:286.5px;top:280px;width:9px;height:7px;background:linear-gradient(#fbe79a,#eec15a);border:1px solid #caa040;border-radius:1px"></div><div class="a" style="left:286.5px;top:279px;width:4px;height:2px;background:#eec864;border-radius:1px 1px 0 0"></div>
<span class="t tcx" style="left:298.5px;top:279.2px;color:#000">[Support]</span>
<div class="a" style="left:288px;top:289px;width:7px;height:9px;background:#fff;border:1px solid #7a8ac8"></div><div class="a" style="left:291px;top:291px;width:1px;height:4px;background:#e02020"></div>
<span class="t tcx" style="left:298.5px;top:289.2px;color:#000">IMpService77BDAF73-B396-481F-9042-AD3.. log</span>
<div class="a" style="left:600px;top:154px;width:314px;height:374px;background:#fff;border:1px solid #a8a8a8"></div>
<div class="a" style="left:601px;top:155px;width:169px;height:12px;background:#c4dff5"></div>
<div class="a" style="left:601px;top:167px;width:312px;height:1px;background:#b8b8b8"></div>
<svg class="a" style="left:602px;top:157.5px" width="5" height="6"><path d="M2.5 0.3L5 3H3.3V5.8H1.7V3H0Z" fill="#111"/></svg>
<span class="t" style="left:607px;top:157.5px;font-size:8.39px;transform:scaleX(.87);transform-origin:0 0;color:#000;-webkit-text-stroke:.1px #000">Имя</span>
<div class="a" style="left:770px;top:155px;width:1px;height:12px;background:#e0e0e0"></div>
<span class="t" style="left:772px;top:157.5px;font-size:8.39px;transform:scaleX(.87);transform-origin:0 0;color:#000;-webkit-text-stroke:.1px #000">Тип</span>
<div class="a" style="left:790px;top:155px;width:1px;height:12px;background:#e0e0e0"></div>
<span class="t" style="left:792px;top:157.5px;font-size:8.39px;transform:scaleX(.87);transform-origin:0 0;color:#000;-webkit-text-stroke:.1px #000">Размер</span>
<div class="a" style="left:824px;top:155px;width:1px;height:12px;background:#e0e0e0"></div>
<span class="t" style="left:826px;top:157.5px;font-size:8.39px;transform:scaleX(.87);transform-origin:0 0;color:#000;-webkit-text-stroke:.1px #000">Дата</span>
<div class="a" style="left:888px;top:155px;width:1px;height:12px;background:#e0e0e0"></div>
<span class="t" style="left:890px;top:157.5px;font-size:8.39px;transform:scaleX(.87);transform-origin:0 0;color:#000;-webkit-text-stroke:.1px #000">Атрибу</span>
<svg class="a" style="left:602px;top:169px" width="9" height="9"><path d="M4.5 0.5L8.5 4.5H6.5V8.5H2.5V4.5H0.5Z" fill="#7a7a7a"/><path d="M2.5 6V8.5H8V6.5" fill="#5a5a5a"/></svg>
<span class="t tcx" style="left:613.5px;top:169.2px;color:#000">[..]</span>
<span class="t tcx" style="left:792.3px;top:169.2px;color:#000;transform:scaleX(.84)">&lt;Папка&gt;</span>
<span class="t tcx" style="left:826px;top:169.2px;color:#000;transform:scaleX(.865)">20.07.2021 00:19</span>
<span class="t tcx" style="left:890.5px;top:169.2px;color:#000;letter-spacing:.7px">----</span>
<div class="a" style="left:601.5px;top:180px;width:9px;height:7px;background:linear-gradient(#fbe79a,#eec15a);border:1px solid #caa040;border-radius:1px"></div><div class="a" style="left:601.5px;top:179px;width:4px;height:2px;background:#eec864;border-radius:1px 1px 0 0"></div>
<span class="t tcx" style="left:613.5px;top:179.2px;color:#000">[CacheManager]</span>
<span class="t tcx" style="left:792.3px;top:179.2px;color:#000;transform:scaleX(.84)">&lt;Папка&gt;</span>
<span class="t tcx" style="left:826px;top:179.2px;color:#000;transform:scaleX(.865)">05.09.2021 21:57</span>
<span class="t tcx" style="left:890.5px;top:179.2px;color:#000;letter-spacing:.7px">----</span>
<div class="a" style="left:601.5px;top:190px;width:9px;height:7px;background:linear-gradient(#fbe79a,#eec15a);border:1px solid #caa040;border-radius:1px"></div><div class="a" style="left:601.5px;top:189px;width:4px;height:2px;background:#eec864;border-radius:1px 1px 0 0"></div>
<span class="t tcx" style="left:613.5px;top:189.2px;color:#000">[RemCheck]</span>
<span class="t tcx" style="left:792.3px;top:189.2px;color:#000;transform:scaleX(.84)">&lt;Папка&gt;</span>
<span class="t tcx" style="left:826px;top:189.2px;color:#000;transform:scaleX(.865)">13.01.2024 11:26</span>
<span class="t tcx" style="left:890.5px;top:189.2px;color:#000;letter-spacing:.7px">----</span>
<div class="a" style="left:601.5px;top:200px;width:9px;height:7px;background:linear-gradient(#fbe79a,#eec15a);border:1px solid #caa040;border-radius:1px"></div><div class="a" style="left:601.5px;top:199px;width:4px;height:2px;background:#eec864;border-radius:1px 1px 0 0"></div>
<span class="t tcx" style="left:613.5px;top:199.2px;color:#000">[ReportLatency]</span>
<span class="t tcx" style="left:792.3px;top:199.2px;color:#000;transform:scaleX(.84)">&lt;Папка&gt;</span>
<span class="t tcx" style="left:826px;top:199.2px;color:#000;transform:scaleX(.865)">29.09.2020 11:11</span>
<span class="t tcx" style="left:890.5px;top:199.2px;color:#000;letter-spacing:.7px">----</span>
<div class="a" style="left:601.5px;top:210px;width:9px;height:7px;background:linear-gradient(#fbe79a,#eec15a);border:1px solid #caa040;border-radius:1px"></div><div class="a" style="left:601.5px;top:209px;width:4px;height:2px;background:#eec864;border-radius:1px 1px 0 0"></div>
<span class="t tcx" style="left:613.5px;top:209.2px;color:#000">[Results]</span>
<span class="t tcx" style="left:792.3px;top:209.2px;color:#000;transform:scaleX(.84)">&lt;Папка&gt;</span>
<span class="t tcx" style="left:826px;top:209.2px;color:#000;transform:scaleX(.865)">20.07.2021 00:26</span>
<span class="t tcx" style="left:890.5px;top:209.2px;color:#000;letter-spacing:.7px">----</span>
<div class="a" style="left:601.5px;top:220px;width:9px;height:7px;background:linear-gradient(#fbe79a,#eec15a);border:1px solid #caa040;border-radius:1px"></div><div class="a" style="left:601.5px;top:219px;width:4px;height:2px;background:#eec864;border-radius:1px 1px 0 0"></div>
<span class="t tcx" style="left:613.5px;top:219.2px;color:#ff0000">[Scans]</span>
<span class="t tcx" style="left:792.3px;top:219.2px;color:#ff0000;transform:scaleX(.84)">&lt;Папка&gt;</span>
<span class="t tcx" style="left:826px;top:219.2px;color:#ff0000;transform:scaleX(.865)">29.09.2020 12:18</span>
<span class="t tcx" style="left:890.5px;top:219.2px;color:#ff0000;letter-spacing:.7px">----</span>
<div class="a" style="left:601.5px;top:230px;width:9px;height:7px;background:linear-gradient(#fbe79a,#eec15a);border:1px solid #caa040;border-radius:1px"></div><div class="a" style="left:601.5px;top:229px;width:4px;height:2px;background:#eec864;border-radius:1px 1px 0 0"></div>
<span class="t tcx" style="left:613.5px;top:229.2px;color:#000">[Service]</span>
<span class="t tcx" style="left:792.3px;top:229.2px;color:#000;transform:scaleX(.84)">&lt;Папка&gt;</span>
<span class="t tcx" style="left:826px;top:229.2px;color:#000;transform:scaleX(.865)">13.01.2024 14:21</span>
<span class="t tcx" style="left:890.5px;top:229.2px;color:#000;letter-spacing:.7px">----</span>
<span class="t" style="left:287px;top:530.5px;font-size:8.51px;transform:scaleX(.87);transform-origin:0 0;-webkit-text-stroke:.1px #000;color:#000">0 Кб из 0 Кб, файлов: 0 из 1, папок: 0 из 11</span>
<span class="t" style="left:602px;top:530.5px;font-size:8.51px;transform:scaleX(.87);transform-origin:0 0;-webkit-text-stroke:.1px #000;color:#000">0 Кб из 0 Кб, файлов: 0 из 0, папок: 1 из 6</span>
<div class="a" style="left:285px;top:539px;width:629px;height:1px;background:#d0d0d0"></div>
<span class="t" style="left:298px;top:544px;font-size:8.28px;transform:scaleX(.87);transform-origin:0 0;color:#000;-webkit-text-stroke:.1px #000">c:\ProgramData\Microsoft\Windows Defender\Scans\History&gt;</span>
<div class="a" style="left:496px;top:540px;width:418px;height:15px;background:#fff;border:1px solid #b8b8b8;border-top-color:#7a7a7a"></div>
<svg class="a" style="left:903px;top:545px" width="8" height="5"><path d="M0.5 0.5L4 4L7.5 0.5" stroke="#777" stroke-width="0.9" fill="none"/></svg>
<span class="t" style="left:285.0px;top:560px;width:89.5px;text-align:center;font-size:8.28px;transform:scaleX(.87);transform-origin:50% 0;color:#000;-webkit-text-stroke:.1px #000">F3 Просмотр</span>
<span class="t" style="left:374.6px;top:560px;width:89.5px;text-align:center;font-size:8.28px;transform:scaleX(.87);transform-origin:50% 0;color:#000;-webkit-text-stroke:.1px #000">F4 Правка</span>
<div class="a" style="left:374.6px;top:557px;width:1px;height:12px;background:#c8c8c8"></div>
<span class="t" style="left:464.1px;top:560px;width:89.5px;text-align:center;font-size:8.28px;transform:scaleX(.87);transform-origin:50% 0;color:#000;-webkit-text-stroke:.1px #000">F5 Копирование</span>
<div class="a" style="left:464.1px;top:557px;width:1px;height:12px;background:#c8c8c8"></div>
<span class="t" style="left:553.7px;top:560px;width:89.5px;text-align:center;font-size:8.28px;transform:scaleX(.87);transform-origin:50% 0;color:#000;-webkit-text-stroke:.1px #000">F6 Перемещение</span>
<div class="a" style="left:553.7px;top:557px;width:1px;height:12px;background:#c8c8c8"></div>
<span class="t" style="left:643.3px;top:560px;width:89.5px;text-align:center;font-size:8.28px;transform:scaleX(.87);transform-origin:50% 0;color:#000;-webkit-text-stroke:.1px #000">F7 Каталог</span>
<div class="a" style="left:643.3px;top:557px;width:1px;height:12px;background:#c8c8c8"></div>
<span class="t" style="left:732.8px;top:560px;width:89.5px;text-align:center;font-size:8.28px;transform:scaleX(.87);transform-origin:50% 0;color:#000;-webkit-text-stroke:.1px #000">F8 Удаление</span>
<div class="a" style="left:732.8px;top:557px;width:1px;height:12px;background:#c8c8c8"></div>
<span class="t" style="left:822.4px;top:560px;width:89.5px;text-align:center;font-size:8.28px;transform:scaleX(.87);transform-origin:50% 0;color:#000;-webkit-text-stroke:.1px #000">Alt+F4 Выход</span>
<div class="a" style="left:822.4px;top:557px;width:1px;height:12px;background:#c8c8c8"></div>
<!-- ============ DIALOGS ============ -->
<div class="a" style="left:459px;top:215px;width:281px;height:106px;background:#f0f0f0;border:1px solid #9a9a9a;box-shadow:0 3px 12px rgba(0,0,0,.3)"></div>
<div class="a" style="left:460px;top:216px;width:279px;height:17px;background:#fff"></div>
<div class="a" style="left:465px;top:219px;width:10px;height:10px;background:#2b4fc7;border-radius:1px"></div>
<div class="a" style="left:467px;top:219px;width:6px;height:3px;background:#e8ecf8"></div>
<div class="a" style="left:466.5px;top:224px;width:7px;height:4px;background:#e86a7c"></div>
<span class="t" style="left:478px;top:220px;font-size:8.51px;transform:scaleX(.87);transform-origin:0 0;color:#9a9a9a">Total Commander</span>
<div class="a" style="left:664px;top:224px;width:8px;height:1px;background:#9a9a9a"></div>
<div class="a" style="left:692px;top:220px;width:8px;height:8px;border:1px solid #d8d8d8"></div>
<svg class="a" style="left:721px;top:220px" width="9" height="9"><path d="M0.5 0.5L8.5 8.5M8.5 0.5L0.5 8.5" stroke="#9a9a9a" stroke-width="0.9"/></svg>
<span class="t" style="left:460px;top:238px;width:279px;text-align:center;font-size:7.93px;transform:scaleX(.87);transform-origin:50% 0;color:#111">Удаление:</span>
<span class="t" style="left:463px;top:258px;font-size:7.8px;transform:scaleX(.87);transform-origin:0 0;color:#111">Удаление: C:\ProgramData\Micro...\...\00\9B288157-4C1C-4F96-B394-A673A7327B01</span>
<div class="a" style="left:474px;top:271px;width:236px;height:14px;background:#e6e6e6;border:1px solid #bcbcbc"></div>
<span class="t" style="left:714px;top:274px;font-size:8.05px;transform:scaleX(.87);transform-origin:0 0;color:#111">0 %</span>
<div class="a" style="left:474px;top:301px;width:251px;height:13px;background:#e1e1e1;border:1px solid #adadad"></div>

<div class="a" style="left:483px;top:268px;width:234px;height:113px;background:#f0f0f0;border:1px solid #7a7a7a;box-shadow:0 4px 14px rgba(0,0,0,.35)"></div>
<div class="a" style="left:484px;top:269px;width:232px;height:16px;background:#fff"></div>
<span class="t" style="left:486px;top:272px;font-size:8.28px;transform:scaleX(.87);transform-origin:0 0;color:#111">Удалить</span>
<svg class="a" style="left:702.5px;top:272px" width="9" height="9"><path d="M0.5 0.5L8.5 8.5M8.5 0.5L0.5 8.5" stroke="#333" stroke-width="0.75"/></svg>
<span class="t" style="left:484px;top:287px;width:232px;text-align:center;font-size:7.82px;transform:scaleX(.87);transform-origin:50% 0;color:#111">Ошибка!</span>
<span class="t" style="left:486px;top:295.5px;font-size:7.7px;transform:scaleX(.87);transform-origin:0 0;color:#111">C:\ProgramData\Micro...\...\00\9B288157-4C1C-4F96-B394-A673A7327B01</span>
<span class="t" style="left:484px;top:303.5px;width:232px;text-align:center;font-size:7.59px;transform:scaleX(.87);transform-origin:50% 0;color:#111">не может быть удалён!</span>
<span class="t" style="left:484px;top:311.5px;width:232px;text-align:center;font-size:7.59px;transform:scaleX(.87);transform-origin:50% 0;color:#111">Снимите защиту от записи!</span>
<div class="btn" style="left:503px;top:327px;border:2px solid #0078d7;line-height:11.2px">Пропустить</div>
<div class="btn" style="left:604px;top:327px;border:1px solid #0078d7;background:#e5f1fb">Повторить</div>
<div class="btn" style="left:503px;top:345px">Пропустить все</div>
<div class="btn" style="left:604px;top:345px">Отмена</div>
<div class="btn" style="left:503px;top:363px"><svg width="9" height="10" style="vertical-align:-2px;margin-right:0.5px" viewBox="0 0 9 10"><path d="M4.5 0.5L8.5 1.8V5C8.5 7.3 6.8 8.8 4.5 9.6C2.2 8.8 0.5 7.3 0.5 5V1.8Z" fill="#f5c02a" stroke="#445" stroke-width="0.5"/><path d="M4.5 0.7V5H0.7V1.9Z" fill="#1c6fd8"/><path d="M4.5 5H8.3C8.2 7.2 6.6 8.7 4.5 9.4Z" fill="#1c6fd8"/></svg>С админ. правами</div>
<div class="btn" style="left:604px;top:363px"><svg width="9" height="10" style="vertical-align:-2px;margin-right:0.5px" viewBox="0 0 9 10"><path d="M4.5 0.5L8.5 1.8V5C8.5 7.3 6.8 8.8 4.5 9.6C2.2 8.8 0.5 7.3 0.5 5V1.8Z" fill="#f5c02a" stroke="#445" stroke-width="0.5"/><path d="M4.5 0.7V5H0.7V1.9Z" fill="#1c6fd8"/><path d="M4.5 5H8.3C8.2 7.2 6.6 8.7 4.5 9.4Z" fill="#1c6fd8"/></svg>Все с админ. правами</div>

<!-- ============ TASKBAR ============ -->
<div class="a" style="left:0;top:650px;width:1200px;height:25px;background:#111"></div>
<svg class="a" style="left:9px;top:656px" width="12" height="12"><path d="M0 1.7L4.9 1V5.7H0ZM5.6 0.9L12 0V5.7H5.6ZM0 6.3H4.9V11L0 10.3ZM5.6 6.3H12V12L5.6 11.1Z" fill="#fff"/></svg>
<svg class="a" style="left:37px;top:655px" width="15" height="15"><circle cx="8.5" cy="6" r="4.6" stroke="#fff" stroke-width="1.4" fill="none"/><path d="M5.2 9.3L1.2 13.5" stroke="#fff" stroke-width="1.6"/></svg>
<svg class="a" style="left:69px;top:655px" width="15" height="14"><path d="M1 1.5H6L7.5 3H14V12.5H1Z" fill="#f3c13a"/><path d="M1 4.5H14" stroke="#e0a820" stroke-width="0.8"/><rect x="4" y="7" width="7" height="5.5" fill="#2a8fd8"/><rect x="5.5" y="9" width="4" height="3.5" fill="#f3c13a"/></svg>
<div class="a" style="left:65px;top:673px;width:24px;height:2px;background:#76b9ed"></div>
<div class="a" style="left:101px;top:655px;width:13px;height:13px;border-radius:50%;background:#2aa3e0"></div>
<svg class="a" style="left:103px;top:658px" width="9" height="8"><path d="M0.5 3.8L8.5 0.5L7 7.5L4.2 5.5L3 7V5L7 1.5L2.5 4.8Z" fill="#fff"/></svg>
<div class="a" style="left:131.5px;top:655px;width:14.5px;height:14.5px;border-radius:50%;background:conic-gradient(from -60deg,#ea4335 0 120deg,#fbbc04 120deg 240deg,#34a853 240deg 360deg)"></div>
<div class="a" style="left:135.5px;top:659px;width:6.5px;height:6.5px;border-radius:50%;background:#4285f4;box-shadow:0 0 0 1px #fff"></div>
<div class="a" style="left:126px;top:673px;width:25px;height:2px;background:#76b9ed"></div>
<div class="a" style="left:154px;top:650px;width:30px;height:25px;background:#333"></div>
<div class="a" style="left:162px;top:655px;width:14px;height:14px;background:#2b4fc7;border-radius:1px"></div>
<div class="a" style="left:165px;top:655px;width:8px;height:4px;background:#dfe4f5"></div>
<div class="a" style="left:164px;top:662px;width:10px;height:6px;background:#f4c6cf"></div>
<div class="a" style="left:154px;top:673px;width:30px;height:2px;background:#76b9ed"></div>
<svg class="a" style="left:1061px;top:658px" width="9" height="6"><path d="M0.5 5.5L4.5 1.5L8.5 5.5" stroke="#fff" stroke-width="1.1" fill="none"/></svg>
<svg class="a" style="left:1074px;top:656px" width="13" height="12"><rect x="3.5" y="1.5" width="9" height="6" stroke="#fff" stroke-width="1" fill="none"/><path d="M1 3V10H6M8 7.5V10M5 11H11" stroke="#fff" stroke-width="1"/></svg>
<svg class="a" style="left:1089px;top:656px" width="13" height="12"><path d="M1.5 4H3.5L6.5 1.5V10.5L3.5 8H1.5Z" stroke="#fff" stroke-width="0.9" fill="none"/><path d="M8.5 4A2.5 2.5 0 0 1 8.5 8M10.3 2.5A4.5 4.5 0 0 1 10.3 9.5" stroke="#fff" stroke-width="0.9" fill="none"/></svg>
<span class="t" style="left:1106px;top:658px;font-size:7.6px;color:#fff">ENG</span>
<span class="t" style="left:1126px;top:653px;width:40px;text-align:center;font-size:7px;color:#fff">14:52</span>
<span class="t" style="left:1126px;top:664px;width:40px;text-align:center;font-size:6.8px;color:#fff">13.01.2024</span>
<svg class="a" style="left:1173px;top:655px" width="13" height="13"><path d="M1 1.5H12V9H6L3.5 11.5V9H1Z" stroke="#fff" stroke-width="1" fill="none"/></svg>
<div class="a" style="left:1197px;top:650px;width:1px;height:25px;background:#555"></div>

</body></html>
